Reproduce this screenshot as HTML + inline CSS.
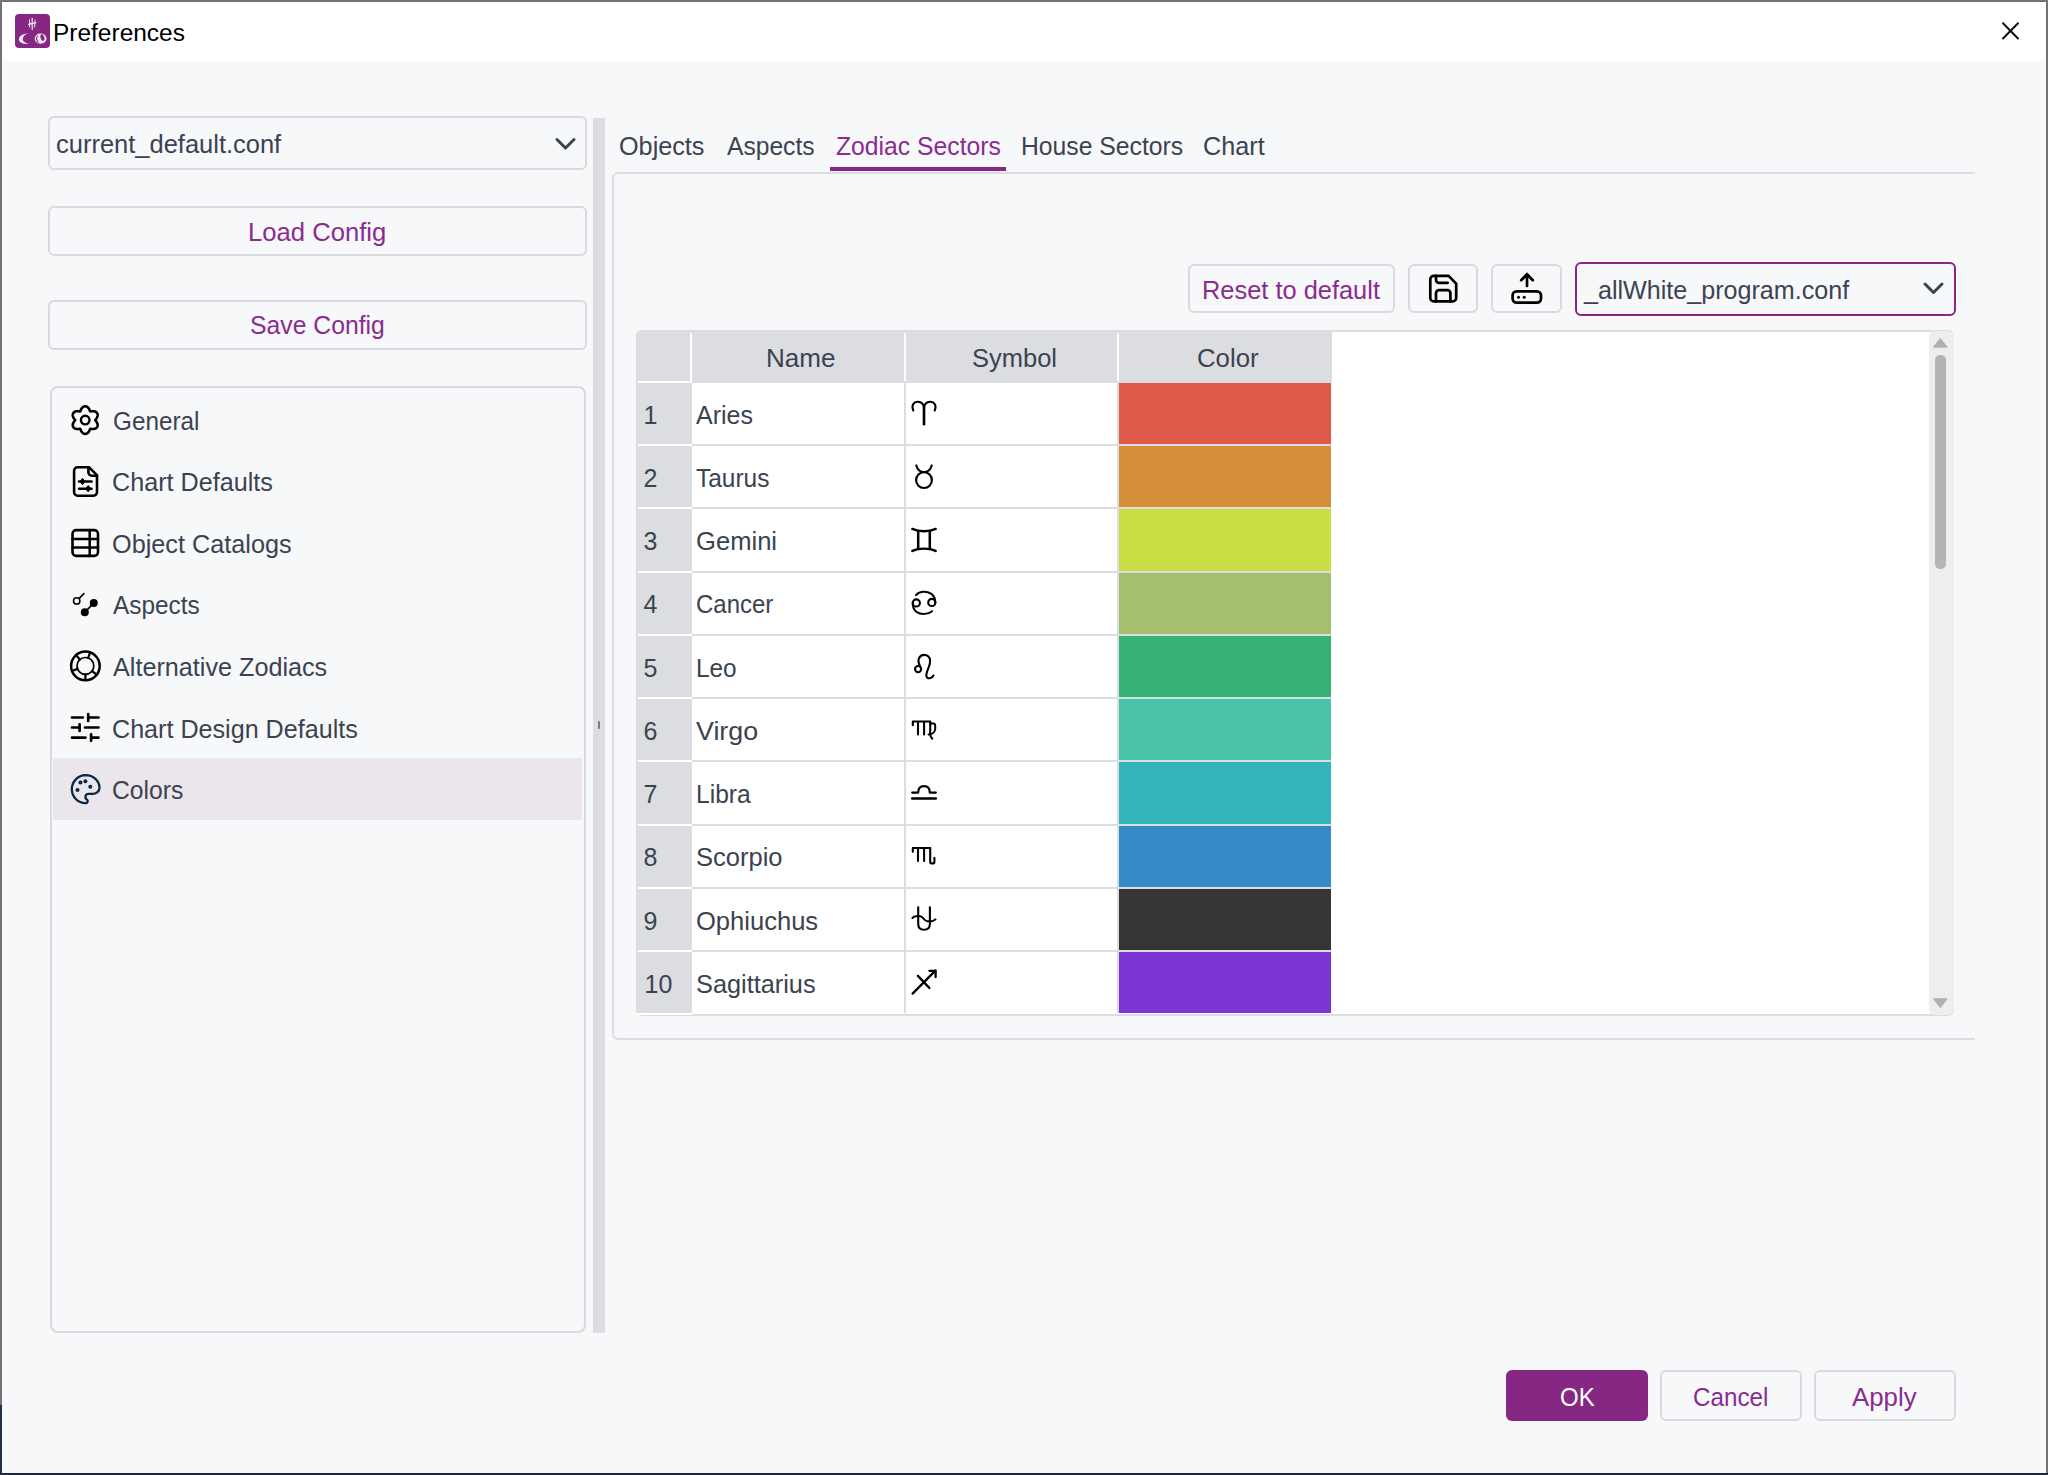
<!DOCTYPE html>
<html><head><meta charset="utf-8"><style>
html,body{margin:0;padding:0;width:2048px;height:1475px;overflow:hidden;background:#f7f8fa}
body{position:relative;font-family:"Liberation Sans", sans-serif}
</style></head><body>
<div style="position:absolute;left:0px;top:0px;width:2048px;height:1475px;background:#f7f8fa"></div><div style="position:absolute;left:0px;top:0px;width:2048px;height:61px;background:#ffffff"></div><div style="position:absolute;left:0px;top:0px;width:2048px;height:2px;background:#737373"></div><div style="position:absolute;left:0px;top:0px;width:2px;height:1475px;background:#737373"></div><div style="position:absolute;left:2046px;top:0px;width:2px;height:1475px;background:#737373"></div><div style="position:absolute;left:0px;top:1473px;width:2048px;height:2px;background:#1e2636"></div><div style="position:absolute;left:0px;top:1405px;width:2px;height:70px;background:#243044"></div><div style="position:absolute;left:15.4px;top:13.6px;width:34.2px;height:34px;background:#852783;border-radius:4px"></div><div style="position:absolute;left:53.19px;top:20.94px;font-size:24.4px;line-height:24.4px;color:#000000;white-space:pre;transform:scaleX(1.0031);transform-origin:0 0;">Preferences</div><div style="position:absolute;left:48px;top:116px;width:539px;height:54px;box-sizing:border-box;border:2px solid #d9dadd;border-radius:6px"></div><div style="position:absolute;left:55.98px;top:132.33px;font-size:25px;line-height:25px;color:#3b4350;white-space:pre;transform:scaleX(1.0191);transform-origin:0 0;">current_default.conf</div><div style="position:absolute;left:48px;top:205.5px;width:539px;height:50px;box-sizing:border-box;border:2px solid #d9dadd;border-radius:6px"></div><div style="position:absolute;left:247.75px;top:219.63px;font-size:25px;line-height:25px;color:#8a2c8f;white-space:pre;transform:scaleX(1.0250);transform-origin:0 0;">Load Config</div><div style="position:absolute;left:48px;top:299.5px;width:539px;height:50px;box-sizing:border-box;border:2px solid #d9dadd;border-radius:6px"></div><div style="position:absolute;left:250.31px;top:313.43px;font-size:25px;line-height:25px;color:#8a2c8f;white-space:pre;transform:scaleX(0.9896);transform-origin:0 0;">Save Config</div><div style="position:absolute;left:49.5px;top:386px;width:536.5px;height:946.5px;box-sizing:border-box;border:2px solid #d9dadd;border-radius:8px"></div><div style="position:absolute;left:53px;top:758px;width:529px;height:62px;background:#ebe6ec"></div><div style="position:absolute;left:112.53px;top:408.83px;font-size:25px;line-height:25px;color:#3b4350;white-space:pre;transform:scaleX(0.9713);transform-origin:0 0;">General</div><div style="position:absolute;left:112.29px;top:470.38px;font-size:25px;line-height:25px;color:#3b4350;white-space:pre;transform:scaleX(1.0063);transform-origin:0 0;">Chart Defaults</div><div style="position:absolute;left:112.29px;top:531.93px;font-size:25px;line-height:25px;color:#3b4350;white-space:pre;transform:scaleX(1.0097);transform-origin:0 0;">Object Catalogs</div><div style="position:absolute;left:113.30px;top:593.48px;font-size:25px;line-height:25px;color:#3b4350;white-space:pre;transform:scaleX(0.9739);transform-origin:0 0;">Aspects</div><div style="position:absolute;left:113.30px;top:655.03px;font-size:25px;line-height:25px;color:#3b4350;white-space:pre;transform:scaleX(1.0075);transform-origin:0 0;">Alternative Zodiacs</div><div style="position:absolute;left:112.20px;top:716.58px;font-size:25px;line-height:25px;color:#3b4350;white-space:pre;transform:scaleX(1.0049);transform-origin:0 0;">Chart Design Defaults</div><div style="position:absolute;left:112.31px;top:778.13px;font-size:25px;line-height:25px;color:#3b4350;white-space:pre;transform:scaleX(0.9873);transform-origin:0 0;">Colors</div><div style="position:absolute;left:593px;top:118px;width:12px;height:1215px;background:#dcdde1"></div><div style="position:absolute;left:598px;top:721px;width:2px;height:8px;background:#7a7a7a;border-radius:1px"></div><div style="position:absolute;left:619.49px;top:134.23px;font-size:25px;line-height:25px;color:#3b4350;white-space:pre;transform:scaleX(1.0084);transform-origin:0 0;">Objects</div><div style="position:absolute;left:727.00px;top:134.23px;font-size:25px;line-height:25px;color:#3b4350;white-space:pre;transform:scaleX(0.9841);transform-origin:0 0;">Aspects</div><div style="position:absolute;left:835.80px;top:134.23px;font-size:25px;line-height:25px;color:#8a2c8f;white-space:pre;transform:scaleX(0.9886);transform-origin:0 0;">Zodiac Sectors</div><div style="position:absolute;left:1020.82px;top:134.23px;font-size:25px;line-height:25px;color:#3b4350;white-space:pre;transform:scaleX(0.9888);transform-origin:0 0;">House Sectors</div><div style="position:absolute;left:1203.19px;top:134.23px;font-size:25px;line-height:25px;color:#3b4350;white-space:pre;transform:scaleX(1.0083);transform-origin:0 0;">Chart</div><div style="position:absolute;left:830px;top:167px;width:176px;height:4px;background:#852783"></div><div style="position:absolute;left:612px;top:172px;width:1400px;height:868px;box-sizing:border-box;border:2px solid #dcdde1;border-radius:6px"></div><div style="position:absolute;left:1975px;top:165px;width:70px;height:880px;background:#f7f8fa"></div><div style="position:absolute;left:1188px;top:264px;width:207px;height:49px;box-sizing:border-box;border:2px solid #d9dadd;border-radius:6px"></div><div style="position:absolute;left:1201.77px;top:277.83px;font-size:25px;line-height:25px;color:#8a2c8f;white-space:pre;transform:scaleX(1.0162);transform-origin:0 0;">Reset to default</div><div style="position:absolute;left:1408px;top:264px;width:70px;height:49px;box-sizing:border-box;border:2px solid #d9dadd;border-radius:6px"></div><div style="position:absolute;left:1491px;top:264px;width:71px;height:49px;box-sizing:border-box;border:2px solid #d9dadd;border-radius:6px"></div><div style="position:absolute;left:1575px;top:262px;width:381px;height:54px;box-sizing:border-box;border:2px solid #852783;border-radius:6px"></div><div style="position:absolute;left:1584.40px;top:278.13px;font-size:25px;line-height:25px;color:#3b4350;white-space:pre;transform:scaleX(1.0045);transform-origin:0 0;">_allWhite_program.conf</div><div style="position:absolute;left:636px;top:330px;width:1318px;height:686px;box-sizing:border-box;border:2px solid #dcdde1;border-radius:6px;background:#ffffff;overflow:hidden"></div><div style="position:absolute;left:636px;top:330px;width:696px;height:53px;background:#dcdde1;border-top-left-radius:6px"></div><div style="position:absolute;left:636px;top:383px;width:56px;height:632px;background:#dcdde1;border-bottom-left-radius:6px"></div><div style="position:absolute;left:690px;top:333px;width:2px;height:48px;background:#ffffff"></div><div style="position:absolute;left:904px;top:333px;width:1.5px;height:48px;background:#ffffff"></div><div style="position:absolute;left:1117px;top:333px;width:1.5px;height:48px;background:#ffffff"></div><div style="position:absolute;left:638px;top:381px;width:54px;height:2px;background:#ffffff"></div><div style="position:absolute;left:765.61px;top:346.33px;font-size:25px;line-height:25px;color:#3b4350;white-space:pre;transform:scaleX(1.0437);transform-origin:0 0;">Name</div><div style="position:absolute;left:972.38px;top:346.33px;font-size:25px;line-height:25px;color:#3b4350;white-space:pre;transform:scaleX(1.0198);transform-origin:0 0;">Symbol</div><div style="position:absolute;left:1197.37px;top:346.33px;font-size:25px;line-height:25px;color:#3b4350;white-space:pre;transform:scaleX(1.0305);transform-origin:0 0;">Color</div><div style="position:absolute;left:692px;top:444.22px;width:639px;height:2px;background:#dcdde1"></div><div style="position:absolute;left:638px;top:444.22px;width:54px;height:2px;background:#ffffff"></div><div style="position:absolute;left:1118px;top:383.0px;width:213px;height:61.22px;background:#e05a49"></div><div style="position:absolute;left:643.5px;top:402.83px;font-size:25px;line-height:25px;color:#3b4350;white-space:pre;">1</div><div style="position:absolute;left:696.00px;top:402.83px;font-size:25px;line-height:25px;color:#3b4350;white-space:pre;transform:scaleX(0.9982);transform-origin:0 0;">Aries</div><div style="position:absolute;left:692px;top:507.44000000000005px;width:639px;height:2px;background:#dcdde1"></div><div style="position:absolute;left:638px;top:507.44000000000005px;width:54px;height:2px;background:#ffffff"></div><div style="position:absolute;left:1118px;top:446.22px;width:213px;height:61.22px;background:#d58e3a"></div><div style="position:absolute;left:643.5px;top:466.05px;font-size:25px;line-height:25px;color:#3b4350;white-space:pre;">2</div><div style="position:absolute;left:696.00px;top:466.05px;font-size:25px;line-height:25px;color:#3b4350;white-space:pre;transform:scaleX(0.9784);transform-origin:0 0;">Taurus</div><div style="position:absolute;left:692px;top:570.66px;width:639px;height:2px;background:#dcdde1"></div><div style="position:absolute;left:638px;top:570.66px;width:54px;height:2px;background:#ffffff"></div><div style="position:absolute;left:1118px;top:509.44px;width:213px;height:61.22px;background:#c9de45"></div><div style="position:absolute;left:643.5px;top:529.27px;font-size:25px;line-height:25px;color:#3b4350;white-space:pre;">3</div><div style="position:absolute;left:695.98px;top:529.27px;font-size:25px;line-height:25px;color:#3b4350;white-space:pre;transform:scaleX(1.0234);transform-origin:0 0;">Gemini</div><div style="position:absolute;left:692px;top:633.88px;width:639px;height:2px;background:#dcdde1"></div><div style="position:absolute;left:638px;top:633.88px;width:54px;height:2px;background:#ffffff"></div><div style="position:absolute;left:1118px;top:572.66px;width:213px;height:61.22px;background:#a4c06f"></div><div style="position:absolute;left:643.5px;top:592.49px;font-size:25px;line-height:25px;color:#3b4350;white-space:pre;">4</div><div style="position:absolute;left:696.04px;top:592.49px;font-size:25px;line-height:25px;color:#3b4350;white-space:pre;transform:scaleX(0.9588);transform-origin:0 0;">Cancer</div><div style="position:absolute;left:692px;top:697.1px;width:639px;height:2px;background:#dcdde1"></div><div style="position:absolute;left:638px;top:697.1px;width:54px;height:2px;background:#ffffff"></div><div style="position:absolute;left:1118px;top:635.88px;width:213px;height:61.22px;background:#37b277"></div><div style="position:absolute;left:643.5px;top:655.71px;font-size:25px;line-height:25px;color:#3b4350;white-space:pre;">5</div><div style="position:absolute;left:696.05px;top:655.71px;font-size:25px;line-height:25px;color:#3b4350;white-space:pre;transform:scaleX(0.9744);transform-origin:0 0;">Leo</div><div style="position:absolute;left:692px;top:760.32px;width:639px;height:2px;background:#dcdde1"></div><div style="position:absolute;left:638px;top:760.32px;width:54px;height:2px;background:#ffffff"></div><div style="position:absolute;left:1118px;top:699.1px;width:213px;height:61.22px;background:#48c3a7"></div><div style="position:absolute;left:643.5px;top:718.93px;font-size:25px;line-height:25px;color:#3b4350;white-space:pre;">6</div><div style="position:absolute;left:696.00px;top:718.93px;font-size:25px;line-height:25px;color:#3b4350;white-space:pre;transform:scaleX(1.0719);transform-origin:0 0;">Virgo</div><div style="position:absolute;left:692px;top:823.54px;width:639px;height:2px;background:#dcdde1"></div><div style="position:absolute;left:638px;top:823.54px;width:54px;height:2px;background:#ffffff"></div><div style="position:absolute;left:1118px;top:762.3199999999999px;width:213px;height:61.22px;background:#33b6bb"></div><div style="position:absolute;left:643.5px;top:782.15px;font-size:25px;line-height:25px;color:#3b4350;white-space:pre;">7</div><div style="position:absolute;left:696.03px;top:782.15px;font-size:25px;line-height:25px;color:#3b4350;white-space:pre;transform:scaleX(0.9852);transform-origin:0 0;">Libra</div><div style="position:absolute;left:692px;top:886.76px;width:639px;height:2px;background:#dcdde1"></div><div style="position:absolute;left:638px;top:886.76px;width:54px;height:2px;background:#ffffff"></div><div style="position:absolute;left:1118px;top:825.54px;width:213px;height:61.22px;background:#3589c8"></div><div style="position:absolute;left:643.5px;top:845.37px;font-size:25px;line-height:25px;color:#3b4350;white-space:pre;">8</div><div style="position:absolute;left:695.98px;top:845.37px;font-size:25px;line-height:25px;color:#3b4350;white-space:pre;transform:scaleX(1.0205);transform-origin:0 0;">Scorpio</div><div style="position:absolute;left:692px;top:949.98px;width:639px;height:2px;background:#dcdde1"></div><div style="position:absolute;left:638px;top:949.98px;width:54px;height:2px;background:#ffffff"></div><div style="position:absolute;left:1118px;top:888.76px;width:213px;height:61.22px;background:#353535"></div><div style="position:absolute;left:643.5px;top:908.59px;font-size:25px;line-height:25px;color:#3b4350;white-space:pre;">9</div><div style="position:absolute;left:695.98px;top:908.59px;font-size:25px;line-height:25px;color:#3b4350;white-space:pre;transform:scaleX(1.0220);transform-origin:0 0;">Ophiuchus</div><div style="position:absolute;left:1118px;top:951.98px;width:213px;height:61px;background:#7b35d2"></div><div style="position:absolute;left:644.5px;top:971.81px;font-size:25px;line-height:25px;color:#3b4350;white-space:pre;">10</div><div style="position:absolute;left:695.99px;top:971.81px;font-size:25px;line-height:25px;color:#3b4350;white-space:pre;transform:scaleX(1.0121);transform-origin:0 0;">Sagittarius</div><div style="position:absolute;left:904px;top:383px;width:1.5px;height:630px;background:#dcdde1"></div><div style="position:absolute;left:1117px;top:383px;width:1.5px;height:630px;background:#dcdde1"></div><div style="position:absolute;left:638px;top:1013px;width:54px;height:2px;background:#ffffff"></div><div style="position:absolute;left:1928.5px;top:331px;width:25px;height:684px;background:#eeeeef;border-radius:6px"></div><div style="position:absolute;left:1935px;top:355px;width:10.5px;height:214px;background:#b4b4b4;border-radius:5px"></div><div style="position:absolute;left:1506px;top:1370px;width:142px;height:51px;background:#852783;border-radius:6px"></div><div style="position:absolute;left:1560.24px;top:1384.53px;font-size:25px;line-height:25px;color:#ffffff;white-space:pre;transform:scaleX(0.9600);transform-origin:0 0;">OK</div><div style="position:absolute;left:1660px;top:1370px;width:142px;height:51px;box-sizing:border-box;border:2px solid #d9dadd;border-radius:6px"></div><div style="position:absolute;left:1693.03px;top:1384.53px;font-size:25px;line-height:25px;color:#8a2c8f;white-space:pre;transform:scaleX(0.9684);transform-origin:0 0;">Cancel</div><div style="position:absolute;left:1814px;top:1370px;width:142px;height:51px;box-sizing:border-box;border:2px solid #d9dadd;border-radius:6px"></div><div style="position:absolute;left:1852.20px;top:1384.53px;font-size:25px;line-height:25px;color:#8a2c8f;white-space:pre;transform:scaleX(1.0333);transform-origin:0 0;">Apply</div>
<svg style="position:absolute;left:0;top:0" width="2048" height="1475" viewBox="0 0 2048 1475">
<path d="M2003 23.3 L2018 38.5 M2018 23.3 L2003 38.5" stroke="#111" stroke-width="2" fill="none" stroke-linecap="round"/><path d="M557 139.5 L565.5 148 L574 139.5" stroke="#3b4350" stroke-width="3" fill="none" stroke-linecap="round" stroke-linejoin="round"/><path d="M1925 284 L1933.5 292.5 L1942 284" stroke="#3b4350" stroke-width="3" fill="none" stroke-linecap="round" stroke-linejoin="round"/><path d="M1934 347 L1940.3 339 L1946.6 347 Z" fill="#b0b0b0" stroke="#b0b0b0" stroke-width="1.5" stroke-linejoin="round"/><path d="M1934 999 L1940.3 1007 L1946.6 999 Z" fill="#b0b0b0" stroke="#b0b0b0" stroke-width="1.5" stroke-linejoin="round"/><path d="M32.2 18.3 V29.6" stroke="#f4e8f4" stroke-width="1.2" fill="none" stroke-linecap="round" stroke-linejoin="round" /><path d="M29.5 19.8 L29.6 27 M35 20 L34.6 27" stroke="#f4e8f4" stroke-width="1.0" fill="none" stroke-linecap="round" stroke-linejoin="round" /><path d="M28.6 24.3 C30.5 23.6 33.5 23.4 35.8 22.6" stroke="#f4e8f4" stroke-width="1.3" fill="none" stroke-linecap="round" stroke-linejoin="round" /><path d="M28.3 33.4 C22.5 33.2 18.6 36.5 18.9 39.4 C19.2 42.5 23 44.5 28.8 43.4 C24.5 43 22.6 41.2 22.8 38.8 C23 36.2 25 34.2 28.3 33.4 Z" fill="#f4e8f4"/><ellipse cx="40.6" cy="38.6" rx="5.9" ry="5.1" fill="#f4e8f4"/><ellipse cx="42.4" cy="37.6" rx="1.9" ry="3.4" fill="#852783" transform="rotate(-15 42.4 37.6)"/><path d="M37.6 35.8 C36.2 37.8 36.6 40.6 38.6 42.4" stroke="#852783" stroke-width="1.1" fill="none"/><path d="M95.20 420.10 L95.38 419.83 L95.60 419.56 L95.83 419.26 L96.07 418.96 L96.30 418.64 L96.53 418.31 L96.75 417.96 L96.95 417.60 L97.12 417.24 L97.28 416.86 L97.41 416.48 L97.51 416.10 L97.58 415.71 L97.62 415.33 L97.63 414.95 L97.60 414.58 L97.54 414.21 L97.45 413.86 L97.32 413.52 L97.15 413.20 L96.95 412.90 L96.73 412.61 L96.47 412.35 L96.18 412.12 L95.88 411.91 L95.54 411.72 L95.19 411.57 L94.82 411.44 L94.44 411.33 L94.04 411.26 L93.64 411.20 L93.24 411.18 L92.83 411.17 L92.42 411.18 L92.02 411.21 L91.62 411.26 L91.24 411.31 L90.87 411.37 L90.52 411.42 L90.20 411.44 L90.06 411.15 L89.93 410.82 L89.79 410.48 L89.65 410.12 L89.49 409.75 L89.31 409.39 L89.12 409.03 L88.91 408.68 L88.68 408.34 L88.44 408.02 L88.17 407.72 L87.89 407.44 L87.59 407.18 L87.28 406.96 L86.96 406.76 L86.62 406.60 L86.27 406.47 L85.92 406.37 L85.56 406.32 L85.20 406.30 L84.84 406.32 L84.48 406.37 L84.13 406.47 L83.78 406.60 L83.44 406.76 L83.12 406.96 L82.81 407.18 L82.51 407.44 L82.23 407.72 L81.96 408.02 L81.72 408.34 L81.49 408.68 L81.28 409.03 L81.09 409.39 L80.91 409.75 L80.75 410.12 L80.61 410.48 L80.47 410.82 L80.34 411.15 L80.20 411.44 L79.88 411.42 L79.53 411.37 L79.16 411.31 L78.78 411.26 L78.38 411.21 L77.98 411.18 L77.57 411.17 L77.16 411.18 L76.76 411.20 L76.36 411.26 L75.96 411.33 L75.58 411.44 L75.21 411.57 L74.86 411.72 L74.52 411.91 L74.22 412.12 L73.93 412.35 L73.67 412.61 L73.45 412.90 L73.25 413.20 L73.08 413.52 L72.95 413.86 L72.86 414.21 L72.80 414.58 L72.77 414.95 L72.78 415.33 L72.82 415.71 L72.89 416.10 L72.99 416.48 L73.12 416.86 L73.28 417.24 L73.45 417.60 L73.65 417.96 L73.87 418.31 L74.10 418.64 L74.33 418.96 L74.57 419.26 L74.80 419.56 L75.02 419.83 L75.20 420.10 L75.02 420.37 L74.80 420.64 L74.57 420.94 L74.33 421.24 L74.10 421.56 L73.87 421.89 L73.65 422.24 L73.45 422.60 L73.28 422.96 L73.12 423.34 L72.99 423.72 L72.89 424.10 L72.82 424.49 L72.78 424.87 L72.77 425.25 L72.80 425.62 L72.86 425.99 L72.95 426.34 L73.08 426.68 L73.25 427.00 L73.45 427.30 L73.67 427.59 L73.93 427.85 L74.22 428.08 L74.52 428.29 L74.86 428.48 L75.21 428.63 L75.58 428.76 L75.96 428.87 L76.36 428.94 L76.76 429.00 L77.16 429.02 L77.57 429.03 L77.98 429.02 L78.38 428.99 L78.78 428.94 L79.16 428.89 L79.53 428.83 L79.88 428.78 L80.20 428.76 L80.34 429.05 L80.47 429.38 L80.61 429.72 L80.75 430.08 L80.91 430.45 L81.09 430.81 L81.28 431.17 L81.49 431.52 L81.72 431.86 L81.96 432.18 L82.23 432.48 L82.51 432.76 L82.81 433.02 L83.12 433.24 L83.44 433.44 L83.78 433.60 L84.13 433.73 L84.48 433.83 L84.84 433.88 L85.20 433.90 L85.56 433.88 L85.92 433.83 L86.27 433.73 L86.62 433.60 L86.96 433.44 L87.28 433.24 L87.59 433.02 L87.89 432.76 L88.17 432.48 L88.44 432.18 L88.68 431.86 L88.91 431.52 L89.12 431.17 L89.31 430.81 L89.49 430.45 L89.65 430.08 L89.79 429.72 L89.93 429.38 L90.06 429.05 L90.20 428.76 L90.52 428.78 L90.87 428.83 L91.24 428.89 L91.62 428.94 L92.02 428.99 L92.42 429.02 L92.83 429.03 L93.24 429.02 L93.64 429.00 L94.04 428.94 L94.44 428.87 L94.82 428.76 L95.19 428.63 L95.54 428.48 L95.88 428.29 L96.18 428.08 L96.47 427.85 L96.73 427.59 L96.95 427.30 L97.15 427.00 L97.32 426.68 L97.45 426.34 L97.54 425.99 L97.60 425.62 L97.63 425.25 L97.62 424.87 L97.58 424.49 L97.51 424.10 L97.41 423.72 L97.28 423.34 L97.12 422.96 L96.95 422.60 L96.75 422.24 L96.53 421.89 L96.30 421.56 L96.07 421.24 L95.83 420.94 L95.60 420.64 L95.38 420.37 L95.20 420.10Z" stroke="#000000" stroke-width="2.6" fill="none" stroke-linecap="round" stroke-linejoin="round" /><circle cx="85.2" cy="420.1" r="4.3" stroke="#000000" stroke-width="2.4" fill="none"/><path d="M89.1 467.3 H77.6 A3.5 3.5 0 0 0 74.1 470.8 V492.2 A3.5 3.5 0 0 0 77.6 495.7 H93.5 A3.5 3.5 0 0 0 97 492.2 V475.2 Z" stroke="#000000" stroke-width="2.6" fill="none" stroke-linecap="round" stroke-linejoin="round" /><path d="M88.4 467.3 V472.2 A3.5 3.5 0 0 0 91.9 475.7 H97" stroke="#000000" stroke-width="2.6" fill="none" stroke-linecap="round" stroke-linejoin="round" /><path d="M79 481.5 H91.6 M79 488.7 H91.6" stroke="#000000" stroke-width="2.5" fill="none" stroke-linecap="round" stroke-linejoin="round" /><path d="M82.5 478.3 L85.2 481.5 L82.5 484.7 L79.8 481.5 Z M88.2 485.5 L90.9 488.7 L88.2 491.9 L85.5 488.7 Z" fill="#000" stroke="#000" stroke-width="0.8" stroke-linejoin="round"/><rect x="72.5" y="530.1" width="25.5" height="25.8" rx="3.8" stroke="#000000" stroke-width="2.6" fill="none"/><path d="M72.5 538.9 H98 M72.5 547.4 H98 M89.7 530.1 V556" stroke="#000000" stroke-width="2.5" fill="none" stroke-linecap="round" stroke-linejoin="round" /><circle cx="76.7" cy="600.9" r="3.2" stroke="#000000" stroke-width="1.5" fill="none"/><path d="M79.2 598.4 L83.9 593.6" stroke="#000000" stroke-width="1.6" fill="none" stroke-linecap="round" stroke-linejoin="round" /><circle cx="93.75" cy="603.1" r="4.0" stroke="#000000" stroke-width="0" fill="#000000"/><circle cx="84.8" cy="612.2" r="4.0" stroke="#000000" stroke-width="0" fill="#000000"/><path d="M84.8 612.2 L93.75 603.1" stroke="#000000" stroke-width="1.7" fill="none" stroke-linecap="round" stroke-linejoin="round" /><circle cx="85.4" cy="665.9" r="14.3" stroke="#000000" stroke-width="2.5" fill="none"/><circle cx="85.4" cy="665.9" r="8.4" stroke="#000000" stroke-width="1.7" fill="none"/><path d="M88.18 657.97 L90.13 652.40" stroke="#000000" stroke-width="2.2" fill="none" stroke-linecap="round" stroke-linejoin="round" stroke-linecap="butt"/><path d="M92.03 671.06 L96.68 674.68" stroke="#000000" stroke-width="2.2" fill="none" stroke-linecap="round" stroke-linejoin="round" stroke-linecap="butt"/><path d="M85.40 674.30 L85.40 680.20" stroke="#000000" stroke-width="2.2" fill="none" stroke-linecap="round" stroke-linejoin="round" stroke-linecap="butt"/><path d="M77.54 668.86 L72.01 670.93" stroke="#000000" stroke-width="2.2" fill="none" stroke-linecap="round" stroke-linejoin="round" stroke-linecap="butt"/><path d="M79.89 659.56 L76.02 655.11" stroke="#000000" stroke-width="2.2" fill="none" stroke-linecap="round" stroke-linejoin="round" stroke-linecap="butt"/><path d="M72 717.5 H82.9 M88.2 717.5 H98.5 M88.2 714.2 V721" stroke="#000000" stroke-width="2.7" fill="none" stroke-linecap="round" stroke-linejoin="round" /><path d="M72 727.5 H79.6 M85 727.5 H98.5 M79.6 724.3 V731" stroke="#000000" stroke-width="2.7" fill="none" stroke-linecap="round" stroke-linejoin="round" /><path d="M72 737.6 H85.5 M91.1 737.6 H98.5 M91.1 734.3 V740.8" stroke="#000000" stroke-width="2.7" fill="none" stroke-linecap="round" stroke-linejoin="round" /><path d="M85.5 803.2 A14.004 14.004 0 0 1 85.5 775.2 C93.23 775.2 99.50 780.77 99.50 787.65 C99.50 789.29 98.76 790.87 97.45 792.04 C96.14 793.21 94.36 793.86 92.50 793.86 H88.61 A3.112 3.112 0 0 0 87.05 799.70 A2.023 2.023 0 0 1 85.5 803.2" stroke="#0a2744" stroke-width="2.3" fill="none" stroke-linecap="round" stroke-linejoin="round" /><circle cx="80.4" cy="782.6" r="2.0" stroke="#0a2744" stroke-width="0" fill="#0a2744"/><circle cx="85.39" cy="781.3" r="2.0" stroke="#0a2744" stroke-width="0" fill="#0a2744"/><circle cx="90.29" cy="786.87" r="2.0" stroke="#0a2744" stroke-width="0" fill="#0a2744"/><circle cx="77.5" cy="789.9" r="2.0" stroke="#0a2744" stroke-width="0" fill="#0a2744"/><path d="M1448 275.9 H1433.8 A3.5 3.5 0 0 0 1430.3 279.4 V297.9 A3.5 3.5 0 0 0 1433.8 301.4 H1452.7 A3.5 3.5 0 0 0 1456.2 297.9 V283.6 L1448.6 275.9" stroke="#000000" stroke-width="2.7" fill="none" stroke-linecap="round" stroke-linejoin="round" /><path d="M1436 275.9 V279.8 A3 3 0 0 0 1439 282.8 H1447.7" stroke="#000000" stroke-width="2.7" fill="none" stroke-linecap="round" stroke-linejoin="round" /><path d="M1436 301.4 V293.2 A3 3 0 0 1 1439 290.2 H1447.4 A3 3 0 0 1 1450.4 293.2 V301.4" stroke="#000000" stroke-width="2.7" fill="none" stroke-linecap="round" stroke-linejoin="round" /><path d="M1527 285.9 V274.2 M1521.2 280.2 L1527 274.2 L1532.8 280.2" stroke="#000000" stroke-width="2.7" fill="none" stroke-linecap="round" stroke-linejoin="round" /><rect x="1512.6" y="291.3" width="28.4" height="11.3" rx="4" stroke="#000000" stroke-width="2.7" fill="none"/><circle cx="1518.5" cy="297.2" r="1.5" stroke="#000000" stroke-width="0" fill="#000000"/><circle cx="1524.2" cy="297.2" r="1.5" stroke="#000000" stroke-width="0" fill="#000000"/><g transform="translate(0 383.00)"><path d="M913.3 27.5 C911 22 914 18.6 917.8 18.8 C921.5 19 923.8 21.5 924 25 C924.2 21.5 926.5 19 930.2 18.8 C934 18.6 937 22 934.7 27.5" stroke="#000000" stroke-width="2.1" fill="none" stroke-linecap="round" stroke-linejoin="round"/></g><g transform="translate(0 383.00)"><path d="M924 24 V41.3" stroke="#000000" stroke-width="2.6" fill="none" stroke-linecap="round" stroke-linejoin="round"/></g><g transform="translate(0 446.22)"><path d="M916.3 19.2 C917.5 23.5 920.3 25.8 924 25.8 C927.7 25.8 930.5 23.5 931.7 19.2" stroke="#000000" stroke-width="2.1" fill="none" stroke-linecap="round" stroke-linejoin="round"/></g><circle cx="924" cy="480.12" r="7.9" stroke="#000000" stroke-width="2.2" fill="none"/><g transform="translate(0 509.44)"><path d="M912.3 19.5 C916 21.3 920 21.8 924 21.8 C928 21.8 932 21.3 935.7 19.5" stroke="#000000" stroke-width="2.4" fill="none" stroke-linecap="round" stroke-linejoin="round"/></g><g transform="translate(0 509.44)"><path d="M912.3 41.5 C916 39.7 920 39.2 924 39.2 C928 39.2 932 39.7 935.7 41.5" stroke="#000000" stroke-width="2.4" fill="none" stroke-linecap="round" stroke-linejoin="round"/></g><g transform="translate(0 509.44)"><path d="M918.2 21.5 V39.5 M929.8 21.5 V39.5" stroke="#000000" stroke-width="2.5" fill="none" stroke-linecap="round" stroke-linejoin="round"/></g><circle cx="916.3" cy="602.96" r="3.6" stroke="#000000" stroke-width="2.1" fill="none"/><circle cx="931.8" cy="602.46" r="3.6" stroke="#000000" stroke-width="2.1" fill="none"/><g transform="translate(0 572.66)"><path d="M916 22.5 C919 18.8 926 17.8 931 21 C934 23 935.3 26 935.3 29.8" stroke="#000000" stroke-width="2.0" fill="none" stroke-linecap="round" stroke-linejoin="round"/></g><g transform="translate(0 572.66)"><path d="M912.7 30.3 C912.7 34 913.5 37 916.5 39.2 C921.5 42.5 928.5 41.5 932 38.5" stroke="#000000" stroke-width="2.0" fill="none" stroke-linecap="round" stroke-linejoin="round"/></g><circle cx="918.1" cy="669.08" r="3.1" stroke="#000000" stroke-width="2.1" fill="none"/><g transform="translate(0 636.68)"><path d="M920.3 30 C918.5 27 918 24 919 21.5 C920.5 18.5 923.5 17.6 926.5 18.6 C929.5 19.8 930.6 23 929.8 27 C929 31 926.3 35 926.3 38.5 C926.3 41.2 928 41.8 929.8 41.6 C931.5 41.4 932.8 40.2 933.5 38.8" stroke="#000000" stroke-width="2.1" fill="none" stroke-linecap="round" stroke-linejoin="round"/></g><g transform="translate(0 699.10)"><path d="M912.8 26.2 V22.4 H930.4 M918 22.4 V35.4 M924.1 22.4 V35.4 M930.2 22.4 V34.8 C930.2 36.5 931 38 932.2 39.6" stroke="#000000" stroke-width="2.1" fill="none" stroke-linecap="round" stroke-linejoin="round"/></g><g transform="translate(0 699.10)"><path d="M930.4 24.3 H933.2 C934.6 24.3 935.2 25.2 935.2 26.6 V30 C935.2 33 932.5 35.2 928.6 35.4" stroke="#000000" stroke-width="2.0" fill="none" stroke-linecap="round" stroke-linejoin="round"/></g><g transform="translate(0 762.32)"><path d="M912.2 30.3 H918.2 C918.2 26 920.7 23.9 924 23.9 C927.3 23.9 929.8 26 929.8 30.3 H935.8" stroke="#000000" stroke-width="2.2" fill="none" stroke-linecap="round" stroke-linejoin="round"/></g><g transform="translate(0 762.32)"><path d="M912.2 36.1 H935.8" stroke="#000000" stroke-width="2.5" fill="none" stroke-linecap="round" stroke-linejoin="round"/></g><g transform="translate(0 825.54)"><path d="M912.8 26.2 V22.4 H930.4 M918 22.4 V35.4 M924.1 22.4 V35.4 M930.2 22.4 V36.6 C930.2 37.4 930.6 37.8 931.4 37.8 H933.2 C934 37.8 934.4 37.4 934.4 36.6 V32.2" stroke="#000000" stroke-width="2.1" fill="none" stroke-linecap="round" stroke-linejoin="round"/></g><g transform="translate(0 888.76)"><path d="M918.2 18.6 V35 C918.2 39 920.5 41 924 41 C927.5 41 929.9 39 929.9 35 V18.6" stroke="#000000" stroke-width="2.1" fill="none" stroke-linecap="round" stroke-linejoin="round"/></g><g transform="translate(0 888.76)"><path d="M912.4 29.3 C913.5 27.9 914.6 27.5 916 27.5 H920.3 C923 27.5 924.3 32.6 927.2 32.6 H931.5 C933 32.6 934.2 31.6 935.5 30.6" stroke="#000000" stroke-width="2.0" fill="none" stroke-linecap="round" stroke-linejoin="round"/></g><g transform="translate(0 951.98)"><path d="M912.6 41.6 L935.6 18.4 M929.4 18.8 H935.6 V25 M917.9 23.9 L929.4 36.1" stroke="#000000" stroke-width="2.3" fill="none" stroke-linecap="round" stroke-linejoin="round"/></g>
</svg>
</body></html>
